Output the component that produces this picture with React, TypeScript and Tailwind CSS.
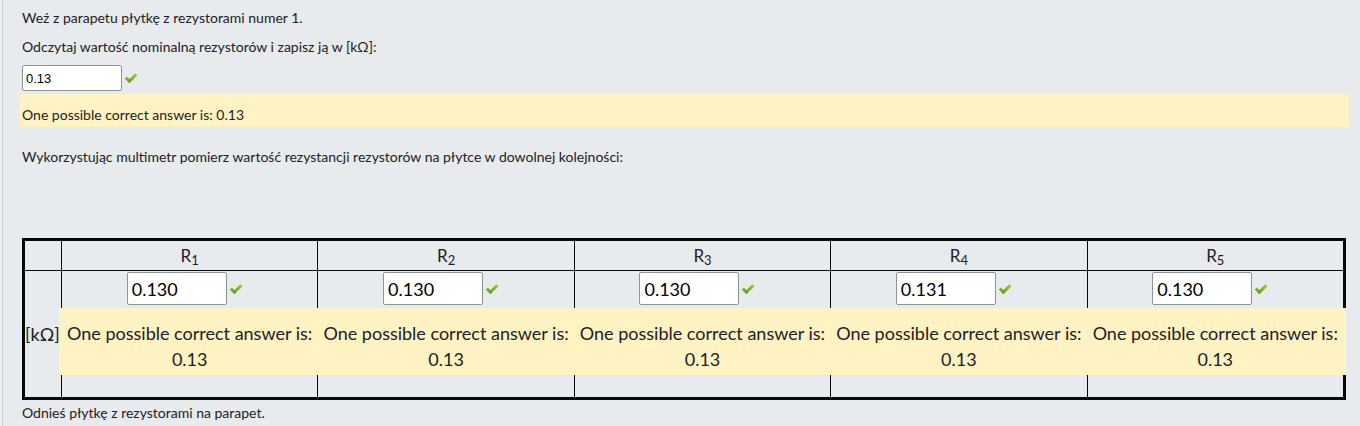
import React from 'react';

const values = ['0.130', '0.130', '0.130', '0.131', '0.130'];

const Check: React.FC<{ className?: string }> = ({ className }) => (
  <svg viewBox="0 0 14 12" className={className} aria-hidden="true">
    <defs>
      <linearGradient id="chk" x1="0" y1="0" x2="0" y2="1">
        <stop offset="0" stopColor="#9ccc3c" />
        <stop offset="1" stopColor="#5f9a10" />
      </linearGradient>
    </defs>
    <path d="M0.8 6.6 L2.9 4.6 L5.4 7.1 L11.3 1.2 L13.4 3.3 L5.4 11.2 Z" fill="url(#chk)" />
  </svg>
);

const Feedback: React.FC<{ children: React.ReactNode }> = ({ children }) => (
  <div className="relative -mx-[3px] bg-[#fff3c4] pt-[12px] pb-[3px] text-[18px] leading-[26px]">
    {children}
  </div>
);

export default function App() {
  return (
    <div className="min-h-[426px] bg-[#eef1f3] pl-[2px] font-['Lato','Noto_Sans',sans-serif] text-[#1d2125]">
      <div className="min-h-[426px] border-l border-[#cdd2d7] bg-[#e7ebee] pl-[17px] pr-[11px] pt-[8px] text-[14px] leading-[19px]">
        <p className="pl-[2px]">Weź z parapetu płytkę z rezystorami numer 1.</p>
        <p className="mt-[10px] pl-[2px]">Odczytaj wartość nominalną rezystorów i zapisz ją w [kΩ]:</p>

        <div className="mt-[9px] flex items-center pl-[2px]">
          <input
            readOnly
            value="0.13"
            className="h-[26px] w-[100px] rounded-[2px] border border-[#8f959b] bg-white px-[3px] font-['Liberation_Sans',Arial,sans-serif] text-[13px] text-black outline-none"
          />
          <Check className="ml-[2px] h-[12px] w-[14px]" />
        </div>

        <div className="mt-[3px] bg-[#fff3c4] px-[2px] pt-[11px] pb-[3px] leading-[19px]">
          One possible correct answer is: 0.13
        </div>

        <p className="mt-[20px] pl-[2px]">
          Wykorzystując multimetr pomierz wartość rezystancji rezystorów na płytce w dowolnej kolejności:
        </p>

        <table className="mt-[72px] ml-[2px] w-[1324px] table-fixed border-separate border-spacing-0 border-[3px] border-[#05090c] text-[17px] text-[#1d2125]">
          <colgroup>
            <col className="w-[36px]" />
            <col />
            <col />
            <col />
            <col />
            <col />
          </colgroup>
          <thead>
            <tr>
              <th className="h-[30px] border-b border-[#05090c] p-0 font-normal"></th>
              {values.map((_, i) => (
                <th key={i} className="h-[30px] border-b border-l border-[#05090c] p-0 pt-[1px] text-center font-normal leading-[28px]">
                  R<sub className="relative top-[3px] align-baseline text-[13px]">{i + 1}</sub>
                </th>
              ))}
            </tr>
          </thead>
          <tbody>
            <tr>
              <td className="p-0 align-middle text-[18px] leading-[22px]">[kΩ]</td>
              {values.map((v, i) => (
                <td key={i} className="border-l border-[#05090c] px-0 pt-[1px] pb-[22px] text-center align-top">
                  <div className="flex items-center justify-center pr-[10px]">
                    <input
                      readOnly
                      value={v}
                      className="h-[33px] w-[100px] rounded-[2px] border border-[#8f959b] bg-white px-[4px] text-[18px] text-black outline-none"
                    />
                    <Check className="ml-[2px] h-[12px] w-[14px]" />
                  </div>
                  <div className="mt-[3px]">
                    <Feedback>
                      One possible correct answer is:
                      <br />
                      0.13
                    </Feedback>
                  </div>
                </td>
              ))}
            </tr>
          </tbody>
        </table>

        <p className="mt-[3px] pl-[2px]">Odnieś płytkę z rezystorami na parapet.</p>
      </div>
    </div>
  );
}
